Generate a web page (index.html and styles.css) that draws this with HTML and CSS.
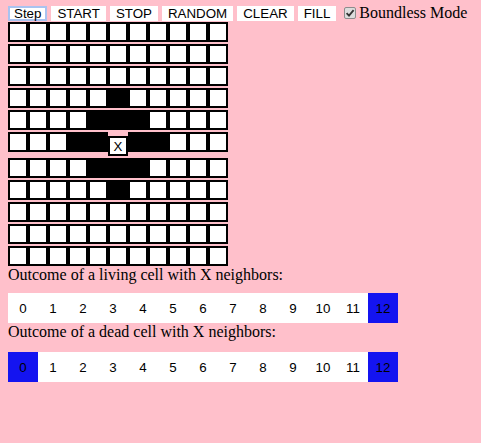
FILE: index.html
```html
<!DOCTYPE html>
<html>
<head>
<meta charset="utf-8">
<title>Life</title>
<link rel="stylesheet" href="styles.css">
</head>
<body>
<div class="toolbar">
  <button class="btn step">Step</button>
  <button class="btn">START</button>
  <button class="btn">STOP</button>
  <button class="btn">RANDOM</button>
  <button class="btn">CLEAR</button>
  <button class="btn">FILL</button>
  <label class="mode"><input type="checkbox" class="chk" checked><span class="mode-text">Boundless Mode</span></label>
</div>
<div class="grid">
  <div class="row"><div class="cell"></div><div class="cell"></div><div class="cell"></div><div class="cell"></div><div class="cell"></div><div class="cell"></div><div class="cell"></div><div class="cell"></div><div class="cell"></div><div class="cell"></div><div class="cell"></div></div>
  <div class="row"><div class="cell"></div><div class="cell"></div><div class="cell"></div><div class="cell"></div><div class="cell"></div><div class="cell"></div><div class="cell"></div><div class="cell"></div><div class="cell"></div><div class="cell"></div><div class="cell"></div></div>
  <div class="row"><div class="cell"></div><div class="cell"></div><div class="cell"></div><div class="cell"></div><div class="cell"></div><div class="cell"></div><div class="cell"></div><div class="cell"></div><div class="cell"></div><div class="cell"></div><div class="cell"></div></div>
  <div class="row"><div class="cell"></div><div class="cell"></div><div class="cell"></div><div class="cell"></div><div class="cell"></div><div class="cell on"></div><div class="cell"></div><div class="cell"></div><div class="cell"></div><div class="cell"></div><div class="cell"></div></div>
  <div class="row"><div class="cell"></div><div class="cell"></div><div class="cell"></div><div class="cell"></div><div class="cell on"></div><div class="cell on"></div><div class="cell on"></div><div class="cell"></div><div class="cell"></div><div class="cell"></div><div class="cell"></div></div>
  <div class="row"><div class="cell"></div><div class="cell"></div><div class="cell"></div><div class="cell on"></div><div class="cell on"></div><div class="cell x">X</div><div class="cell on"></div><div class="cell on"></div><div class="cell"></div><div class="cell"></div><div class="cell"></div></div>
  <div class="row"><div class="cell"></div><div class="cell"></div><div class="cell"></div><div class="cell"></div><div class="cell on"></div><div class="cell on"></div><div class="cell on"></div><div class="cell"></div><div class="cell"></div><div class="cell"></div><div class="cell"></div></div>
  <div class="row"><div class="cell"></div><div class="cell"></div><div class="cell"></div><div class="cell"></div><div class="cell"></div><div class="cell on"></div><div class="cell"></div><div class="cell"></div><div class="cell"></div><div class="cell"></div><div class="cell"></div></div>
  <div class="row"><div class="cell"></div><div class="cell"></div><div class="cell"></div><div class="cell"></div><div class="cell"></div><div class="cell"></div><div class="cell"></div><div class="cell"></div><div class="cell"></div><div class="cell"></div><div class="cell"></div></div>
  <div class="row"><div class="cell"></div><div class="cell"></div><div class="cell"></div><div class="cell"></div><div class="cell"></div><div class="cell"></div><div class="cell"></div><div class="cell"></div><div class="cell"></div><div class="cell"></div><div class="cell"></div></div>
  <div class="row"><div class="cell"></div><div class="cell"></div><div class="cell"></div><div class="cell"></div><div class="cell"></div><div class="cell"></div><div class="cell"></div><div class="cell"></div><div class="cell"></div><div class="cell"></div><div class="cell"></div></div>
</div>
<div class="label">Outcome of a living cell with X neighbors:</div>
<div class="nums first">
  <div class="num">0</div><div class="num">1</div><div class="num">2</div><div class="num">3</div><div class="num">4</div><div class="num">5</div><div class="num">6</div><div class="num">7</div><div class="num">8</div><div class="num">9</div><div class="num">10</div><div class="num">11</div><div class="num sel">12</div>
</div>
<div class="label">Outcome of a dead cell with X neighbors:</div>
<div class="nums second">
  <div class="num sel">0</div><div class="num">1</div><div class="num">2</div><div class="num">3</div><div class="num">4</div><div class="num">5</div><div class="num">6</div><div class="num">7</div><div class="num">8</div><div class="num">9</div><div class="num">10</div><div class="num">11</div><div class="num sel">12</div>
</div>
</body>
</html>
```
FILE: styles.css
```css
html {
  background: #ffc0cb;
}
body {
  margin: 4px 8px 8px;
  background: #ffc0cb;
  font-family: "Liberation Serif", "Times New Roman", serif;
  font-size: 16px;
  color: #000;
}
.toolbar {
  display: flex;
  align-items: flex-start;
  height: 18px;
  gap: 4px;
}
.btn {
  margin: 2px 0 0;
  height: 15px;
  box-sizing: border-box;
  padding: 0 6px;
  border: none;
  background: #fff;
  font-family: "Liberation Sans", Arial, sans-serif;
  font-size: 13.33px;
  line-height: 15px;
  color: #000;
}
.btn.step {
  border: 2px solid #a9c3f0;
  padding: 0 4px;
  line-height: 11px;
}
.mode {
  display: flex;
  align-items: flex-start;
  margin-left: 4px;
  line-height: 18px;
}
.chk {
  appearance: none;
  -webkit-appearance: none;
  margin: 3px 3px 0 0;
  width: 12px;
  height: 12px;
  box-sizing: border-box;
  border: 1px solid #8c8c8c;
  border-radius: 2px;
  background: #dcdcdc url("data:image/svg+xml,%3Csvg xmlns='http://www.w3.org/2000/svg' viewBox='0 0 10 10'%3E%3Cpath d='M1.6 5.2 L4 7.6 L8.6 2.2' fill='none' stroke='%23333' stroke-width='1.8'/%3E%3C/svg%3E") center / 10px 10px no-repeat;
}
.grid {
  display: flex;
  flex-direction: column;
  gap: 2px;
  width: 220px;
}
.row {
  display: flex;
  align-items: flex-start;
}
.cell {
  width: 20px;
  height: 20px;
  box-sizing: border-box;
  border: 2px solid #000;
  background: #fff;
  flex: none;
}
.cell.on {
  background: #000;
}
.cell.x {
  margin-top: 4px;
  display: flex;
  align-items: center;
  justify-content: center;
  font-family: "Liberation Sans", Arial, sans-serif;
  font-size: 13.33px;
  color: #000;
}
.label {
  line-height: 18px;
}
.nums {
  display: flex;
  margin-top: 9px;
}
.nums.second {
  margin-top: 11px;
}
.num {
  width: 30px;
  height: 30px;
  display: flex;
  align-items: center;
  justify-content: center;
  background: #fff;
  font-family: "Liberation Sans", Arial, sans-serif;
  font-size: 13.33px;
  color: #000;
}
.num.sel {
  background: #1414f0;
}
```
